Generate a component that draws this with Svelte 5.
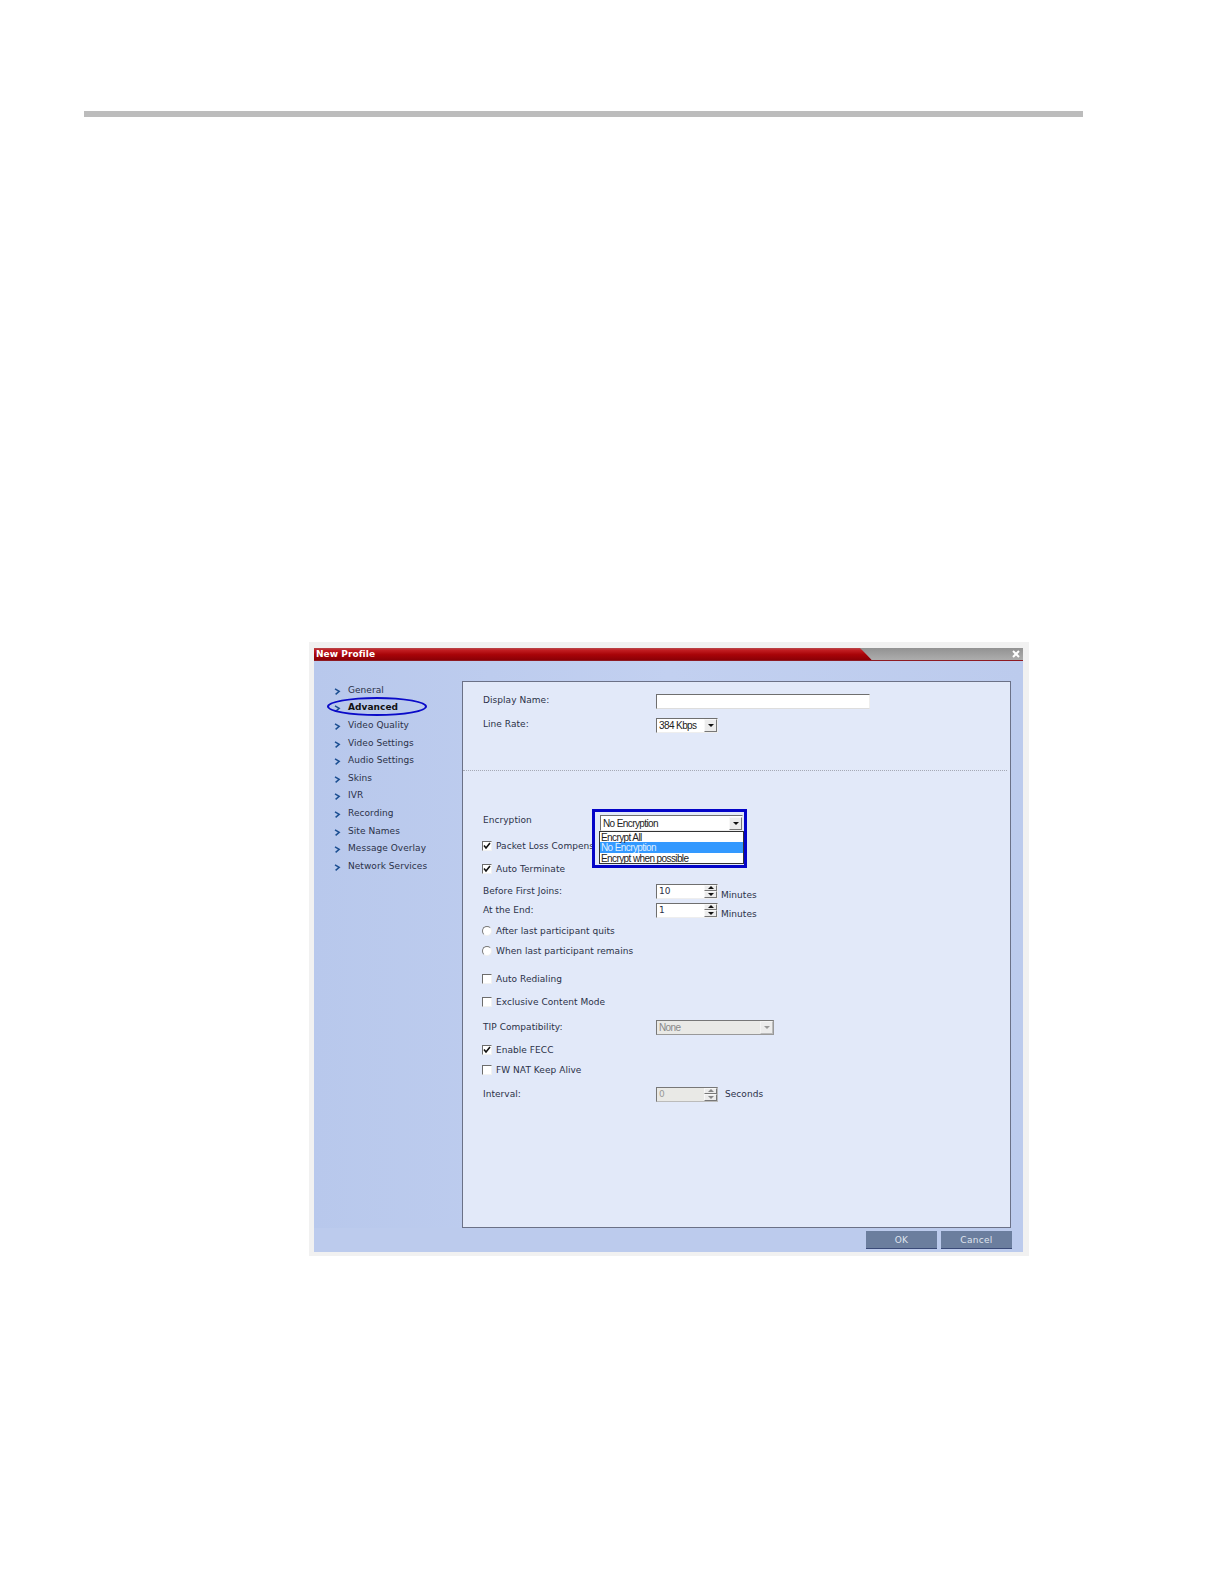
<script lang="ts">
	const navItems = [
		'General', 'Advanced', 'Video Quality', 'Video Settings', 'Audio Settings', 'Skins',
		'IVR', 'Recording', 'Site Names', 'Message Overlay', 'Network Services'
	];
	const encryptionOptions = ['Encrypt All', 'No Encryption', 'Encrypt when possible'];
	const selectedOption = 'No Encryption';
</script>

{#snippet check(checked)}
	<span class="check">
		{#if checked}
			<svg viewBox="0 0 10 10" width="10" height="10"><path d="M2 4.5 4 7 8 2" fill="none" stroke="#111" stroke-width="1.6"/></svg>
		{/if}
	</span>
{/snippet}

{#snippet dropButton(disabled)}
	<span class="drop-btn" class:disabled><i class="tri"></i></span>
{/snippet}

{#snippet spinner(value, disabled)}
	<span class="spin" class:disabled>
		<span class="spin-value">{value}</span>
		<span class="spin-btns">
			<span class="spin-btn"><i class="tri up"></i></span>
			<span class="spin-btn"><i class="tri"></i></span>
		</span>
	</span>
{/snippet}

<div class="page">
	<div class="rule"></div>

	<div class="frame">
		<div class="dialog">
			<header class="titlebar">
				<div class="title-red">New Profile</div>
				<div class="title-grey">
					<svg viewBox="0 0 8 8" width="8" height="8"><path d="M1 1l6 6M7 1 1 7" stroke="#fff" stroke-width="2"/></svg>
				</div>
			</header>

			<div class="body">
				<nav class="nav">
					{#each navItems as item}
						<div class="nav-item" class:active={item === 'Advanced'}>
							<svg class="chev" viewBox="0 0 7 7" width="7" height="7"><path d="M1 .8 5.2 3.4 1.6 6.4" fill="none" stroke="#1c4f92" stroke-width="1.5"/></svg>
							<span>{item}</span>
							{#if item === 'Advanced'}
								<span class="ellipse"></span>
							{/if}
						</div>
					{/each}
				</nav>

				<main class="panel">
					<section class="top">
						<div class="row">
							<span class="label up-3">Display Name:</span>
							<span class="input"></span>
						</div>
						<div class="row r-rate">
							<span class="label up-3">Line Rate:</span>
							<span class="select rate">
								<span class="select-value">384 Kbps</span>
								{@render dropButton(false)}
							</span>
						</div>
					</section>

					<section class="main">
						<div class="row r-enc">
							<span class="label">Encryption</span>
						</div>
						<div class="row r-packet">
							<span class="check-line">{@render check(true)}Packet Loss Compensation</span>
						</div>
						<div class="row r-auto">
							<span class="check-line">{@render check(true)}Auto Terminate</span>
						</div>
						<div class="row r-before">
							<span class="label">Before First Joins:</span>
							{@render spinner('10', false)}
							<span class="unit">Minutes</span>
						</div>
						<div class="row r-end">
							<span class="label">At the End:</span>
							{@render spinner('1', false)}
							<span class="unit">Minutes</span>
						</div>
						<div class="row r-after">
							<span class="check-line"><span class="radio"></span>After last participant quits</span>
						</div>
						<div class="row r-when">
							<span class="check-line"><span class="radio"></span>When last participant remains</span>
						</div>
						<div class="row r-redial">
							<span class="check-line">{@render check(false)}Auto Redialing</span>
						</div>
						<div class="row r-excl">
							<span class="check-line">{@render check(false)}Exclusive Content Mode</span>
						</div>
						<div class="row r-tip">
							<span class="label">TIP Compatibility:</span>
							<span class="select tip disabled">
								<span class="select-value">None</span>
								{@render dropButton(true)}
							</span>
						</div>
						<div class="row r-fecc">
							<span class="check-line">{@render check(true)}Enable FECC</span>
						</div>
						<div class="row r-nat">
							<span class="check-line">{@render check(false)}FW NAT Keep Alive</span>
						</div>
						<div class="row r-interval">
							<span class="label">Interval:</span>
							{@render spinner('0', true)}
							<span class="unit seconds">Seconds</span>
						</div>

						<div class="enc-callout">
							<span class="select enc">
								<span class="select-value">No Encryption</span>
								{@render dropButton(false)}
							</span>
							<div class="enc-list">
								{#each encryptionOptions as option}
									<div class="enc-option" class:selected={option === selectedOption}>{option}</div>
								{/each}
							</div>
						</div>
					</section>
				</main>
			</div>

			<footer class="footer">
				<button class="btn">OK</button>
				<button class="btn">Cancel</button>
			</footer>
		</div>
	</div>
</div>

<style>
	:global(body) {
		background: #fff;
	}

	.page {
		height: 1584px;
		padding: 111px 0 0 84px;
		box-sizing: border-box;
		font-family: "DejaVu Sans", sans-serif;
	}

	.rule {
		width: 999px;
		height: 6px;
		background: #bcbcbc;
	}

	.frame {
		width: 720px;
		margin: 525px 0 0 225px;
		padding: 6px 6px 4px 5px;
		box-sizing: border-box;
		background: #f1f1f1;
	}

	.dialog {
		display: flex;
		flex-direction: column;
		background: #bccbed;
		color: #2b3148;
		font-size: 9px;
		letter-spacing: 0.05px;
	}

	.titlebar {
		display: flex;
		height: 12px;
		border-bottom: 1px solid #8e1a22;
	}

	.title-red {
		width: 558px;
		padding-left: 2px;
		box-sizing: border-box;
		background: linear-gradient(#b8474c 0, #c01c20 20%, #a80408 55%, #8a0006 100%);
		clip-path: polygon(0 0, 547px 0, 100% 100%, 0 100%);
		color: #fff;
		font-weight: 700;
		font-size: 9px;
		line-height: 12px;
	}

	.title-grey {
		flex: 1;
		margin-left: -12px;
		display: flex;
		justify-content: flex-end;
		align-items: center;
		padding-right: 3px;
		background: linear-gradient(#929292, #adadad);
		clip-path: polygon(0 0, 100% 0, 100% 100%, 12px 100%);
	}

	.body {
		display: flex;
		padding-top: 20px;
		background: linear-gradient(90deg, #b8c8ec, #c2d0f0 50%, #bccbed);
	}

	.nav {
		width: 148px;
		flex: none;
	}

	.nav-item {
		position: relative;
		display: flex;
		align-items: center;
		height: 17.6px;
		padding-left: 20px;
		gap: 7px;
		white-space: nowrap;
	}

	.nav-item.active {
		font-weight: 700;
		color: #111;
	}

	.chev {
		flex: none;
		margin-top: 3px;
	}

	.ellipse {
		position: absolute;
		left: 13px;
		top: -2px;
		width: 100px;
		height: 19px;
		box-sizing: border-box;
		border: 2px solid #0a0ac8;
		border-radius: 50%;
	}

	.panel {
		width: 549px;
		height: 547px;
		box-sizing: border-box;
		border: 1px solid #6b7187;
		background: #e2e9f9;
	}

	.top {
		height: 89px;
		padding-top: 12px;
		box-sizing: border-box;
		border-bottom: 1px dotted #a5a9b5;
		margin-right: 3px;
	}

	.main {
		position: relative;
		display: flow-root;
	}

	.row {
		display: flex;
		align-items: center;
		height: 14px;
		padding-left: 20px;
		white-space: nowrap;
	}

	.r-rate { margin-top: 10px; }
	.r-enc { margin-top: 42px; }
	.r-packet { margin-top: 12px; }
	.r-auto { margin-top: 9px; }
	.r-before { margin-top: 8px; }
	.r-end { margin-top: 5px; }
	.r-after { margin-top: 7px; }
	.r-when { margin-top: 6px; }
	.r-redial { margin-top: 14px; }
	.r-excl { margin-top: 9px; }
	.r-tip { margin-top: 11px; }
	.r-fecc { margin-top: 9px; }
	.r-nat { margin-top: 6px; }
	.r-interval { margin-top: 10px; }

	.r-packet .check-line {
		width: 117px;
		overflow: hidden;
	}

	.label {
		width: 173px;
		flex: none;
	}

	.up-3 {
		margin-top: -3px;
	}

	.check-line {
		display: flex;
		align-items: center;
		gap: 4px;
		margin-left: -1px;
	}

	.check {
		width: 10px;
		height: 10px;
		flex: none;
		box-sizing: border-box;
		background: #fff;
		border: 1px solid;
		border-color: #6c6c6c #f2f2f2 #f2f2f2 #6c6c6c;
		display: flex;
		align-items: center;
		justify-content: center;
	}

	.check svg {
		flex: none;
	}

	.radio {
		width: 10px;
		height: 10px;
		flex: none;
		box-sizing: border-box;
		border-radius: 50%;
		background: #fff;
		border: 1px solid;
		border-color: #777 #eee #eee #777;
	}

	.input {
		width: 214px;
		height: 15px;
		box-sizing: border-box;
		background: #fff;
		border: 1px solid;
		border-color: #6f6f6f #eee #ddd #6f6f6f;
	}

	.select {
		display: flex;
		align-items: center;
		justify-content: space-between;
		height: 15px;
		box-sizing: border-box;
		background: #fff;
		border: 1px solid;
		border-color: #6f6f6f #eee #eee #6f6f6f;
		font-family: "Liberation Sans", sans-serif;
		color: #222;
		padding-left: 2px;
	}

	.select-value {
		font-size: 10px;
		letter-spacing: -0.6px;
	}

	.select.rate { width: 62px; }
	.select.tip { width: 118px; }

	.select.disabled {
		background: #e9e9e6;
		border-color: #777 #999 #999 #777;
		color: #888;
	}

	.drop-btn,
	.spin-btn {
		display: flex;
		align-items: center;
		justify-content: center;
		background: #ececec;
		box-sizing: border-box;
		border: 1px solid;
		border-color: #f8f8f8 #777 #777 #f8f8f8;
	}

	.drop-btn {
		width: 13px;
		height: 13px;
	}

	.drop-btn.disabled {
		border-color: #f4f4f4 #bbb #bbb #f4f4f4;
	}

	.drop-btn.disabled .tri {
		border-top-color: #999;
	}

	.tri {
		width: 0;
		height: 0;
		border-left: 3px solid transparent;
		border-right: 3px solid transparent;
		border-top: 3px solid #111;
	}

	.tri.up {
		border-top: 0;
		border-bottom: 3px solid #111;
	}

	.spin {
		display: flex;
		justify-content: space-between;
		width: 62px;
		height: 15px;
		box-sizing: border-box;
		background: #fff;
		border: 1px solid;
		border-color: #6f6f6f #eee #eee #6f6f6f;
		padding-left: 2px;
		font-size: 9px;
	}

	.spin-value {
		line-height: 13px;
	}

	.spin-btns {
		display: flex;
		flex-direction: column;
		width: 13px;
	}

	.spin-btn {
		height: 6.5px;
	}

	.spin.disabled {
		background: #e9e9e6;
		color: #999;
		border-color: #777 #bbb #bbb #777;
	}

	.spin.disabled .tri {
		border-top-color: #888;
		border-bottom-color: #888;
	}

	.unit {
		margin: 8px 0 0 3px;
	}

	.unit.seconds {
		margin: 0 0 0 7px;
	}

	.enc-callout {
		position: absolute;
		left: 129px;
		top: 38px;
		width: 155px;
		height: 59px;
		box-sizing: border-box;
		border: 3px solid #0404c8;
		background: #e2e9f9;
		padding: 3px 1px 0 4px;
		font-family: "Liberation Sans", sans-serif;
		color: #222;
	}

	.select.enc {
		width: 143px;
		margin-left: 1px;
		height: 16px;
	}

	.enc-list {
		width: 145px;
		height: 33px;
		box-sizing: border-box;
		border: 1px solid #333;
		background: #fff;
	}

	.enc-option {
		height: 10.4px;
		line-height: 11.4px;
		font-size: 10px;
		letter-spacing: -0.6px;
		padding-left: 1px;
	}

	.enc-option.selected {
		background: #3399ff;
		color: #dfefff;
	}

	.footer {
		display: flex;
		justify-content: flex-end;
		gap: 4px;
		padding: 3px 11px 3px 0;
	}

	.btn {
		width: 71px;
		height: 18px;
		padding: 0;
		border: 0;
		border-bottom: 1px solid #3a4a78;
		background: #6b7e9e;
		color: #dfe4ee;
		font: 9px "DejaVu Sans", sans-serif;
		letter-spacing: 0.3px;
	}
</style>
